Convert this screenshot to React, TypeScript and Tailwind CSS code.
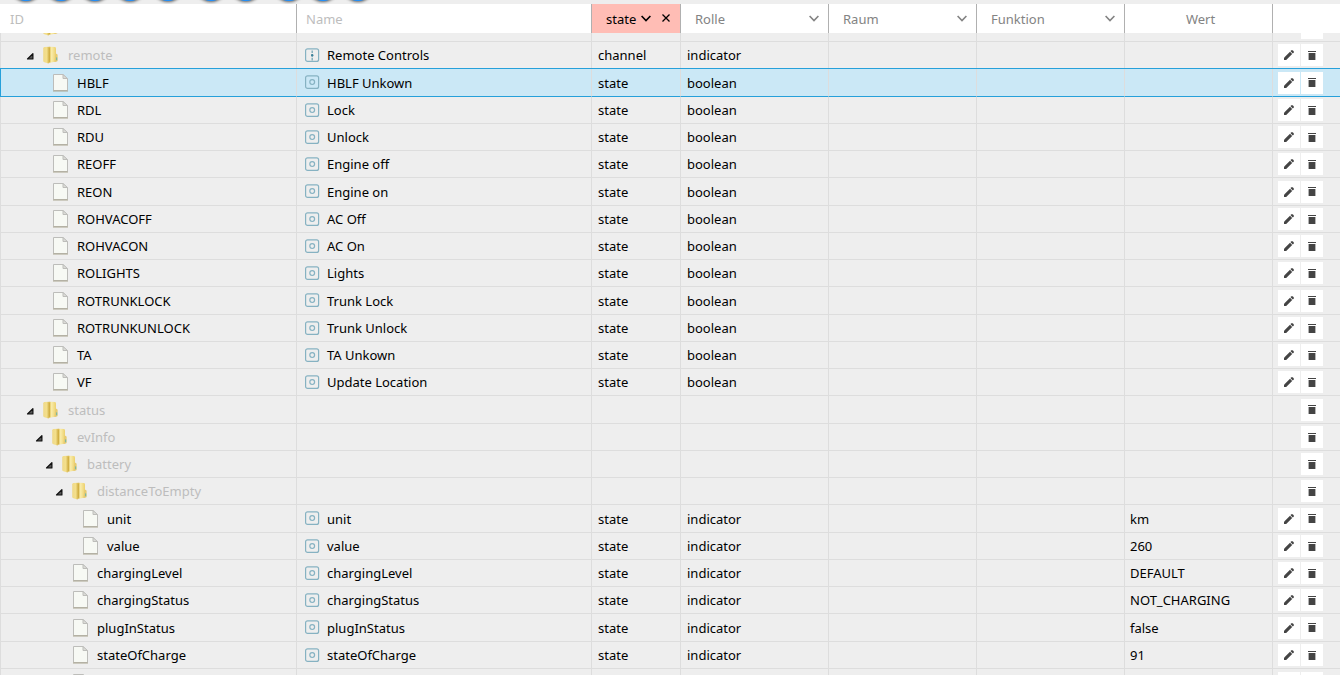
import React from "react";

type Row = {
  id: string;
  depth: number;
  kind: "folder" | "file";
  name?: string;
  type?: "state" | "channel";
  role?: string;
  value?: string;
  selected?: boolean;
};

const remote = (id: string, name: string, selected = false): Row => ({
  id, name, depth: 3, kind: "file", type: "state", role: "boolean", selected,
});

const info = (id: string, value: string, depth: number): Row => ({
  id, name: id, depth, kind: "file", type: "state", role: "indicator", value,
});

const rows: Row[] = [
  { id: "remote", depth: 0, kind: "folder", name: "Remote Controls", type: "channel", role: "indicator" },
  remote("HBLF", "HBLF Unkown", true),
  remote("RDL", "Lock"),
  remote("RDU", "Unlock"),
  remote("REOFF", "Engine off"),
  remote("REON", "Engine on"),
  remote("ROHVACOFF", "AC Off"),
  remote("ROHVACON", "AC On"),
  remote("ROLIGHTS", "Lights"),
  remote("ROTRUNKLOCK", "Trunk Lock"),
  remote("ROTRUNKUNLOCK", "Trunk Unlock"),
  remote("TA", "TA Unkown"),
  remote("VF", "Update Location"),
  { id: "status", depth: 0, kind: "folder" },
  { id: "evInfo", depth: 1, kind: "folder" },
  { id: "battery", depth: 2, kind: "folder" },
  { id: "distanceToEmpty", depth: 3, kind: "folder" },
  info("unit", "km", 6),
  info("value", "260", 6),
  info("chargingLevel", "DEFAULT", 5),
  info("chargingStatus", "NOT_CHARGING", 5),
  info("plugInStatus", "false", 5),
  info("stateOfCharge", "91", 5),
];

const folderIndent = ["pl-[25px]", "pl-[34px]", "pl-[44px]", "pl-[54px]"];
const fileIndent = ["", "", "", "pl-[52px]", "", "pl-[72px]", "pl-[82px]"];

function Folder() {
  return (
    <svg width="16" height="18" viewBox="0 0 16 18" className="shrink-0">
      <defs>
        <linearGradient id="folder-back" x1="0" x2="1">
          <stop offset="0" stopColor="#efd98a" />
          <stop offset="0.5" stopColor="#f3df8c" />
          <stop offset="1" stopColor="#cfab3c" />
        </linearGradient>
        <linearGradient id="folder-front" x1="0" x2="1">
          <stop offset="0" stopColor="#dcbb4c" />
          <stop offset="0.35" stopColor="#f9ecaa" />
          <stop offset="1" stopColor="#ecd06c" />
        </linearGradient>
      </defs>
      <path d="M1.2 2.4 Q1.2 1.2 2.4 1 L8 0.8 V16.2 L6.4 17.4 L2.4 16.2 Q1.2 15.8 1.2 15 Z" fill="url(#folder-back)" />
      <path d="M7.2 1.6 Q7.4 0.8 8.6 0.8 L13 1 Q14 1.2 14 2.4 V15.6 L9.2 16.6 Q7.6 16.8 7.4 15.6 Z" fill="url(#folder-front)" />
      <path d="M13.6 7.4 L15 8 Q15.6 8.3 15.6 9 V14.6 Q15.6 15.2 15 15.4 L12.4 15.9 Z" fill="#e6ca70" />
      <path d="M7.3 2 V15.8" stroke="#c9a53a" strokeWidth="0.7" />
      <rect x="14" y="11.4" width="1.2" height="2.8" fill="#7fb8a0" />
    </svg>
  );
}

function FileIcon() {
  return (
    <svg width="16" height="18" viewBox="0 0 16 18" className="shrink-0">
      <path d="M0.5 0.5 H10 L14.5 5 V16.5 H0.5 Z" fill="#f7f9f4" stroke="#bdbdba" />
      <path d="M10 0.5 V4.5 H14.5 Z" fill="#dcdcd8" stroke="#bdbdba" />
      <path d="M0 17 H15" stroke="#aaa58f" strokeWidth="1" />
    </svg>
  );
}

function Expander() {
  return (
    <svg width="8" height="8" viewBox="0 0 8 8" className="mt-0.5 shrink-0">
      <path d="M6.9 1.6 V7 H1.5 Z" fill="#555" stroke="#111" strokeWidth="1.2" strokeLinejoin="round" />
    </svg>
  );
}

function TypeIcon({ channel }: { channel: boolean }) {
  return (
    <svg width="15" height="15" viewBox="0 0 15 15" fill="none" className="shrink-0">
      <rect x="0.6" y="0.8" width="13" height="12.6" rx="2" stroke="#86b2c2" strokeWidth="1.2" />
      {channel ? (
        <>
          <path d="M7.2 2.4 V12.4" stroke="#7fabb9" strokeWidth="1.4" strokeDasharray="2.6 1.1" />
          <circle cx="7.2" cy="7.2" r="1.2" fill="#3f8299" />
        </>
      ) : (
        <circle cx="7.2" cy="7.1" r="2.4" stroke="#86b2c2" strokeWidth="1.2" />
      )}
    </svg>
  );
}

function Chevron() {
  return (
    <svg width="10" height="7" viewBox="0 0 10 7" fill="none" className="shrink-0">
      <path d="M0.6 1 L5 5.6 L9.4 1" stroke="currentColor" strokeWidth="1.6" />
    </svg>
  );
}

function Pencil() {
  return (
    <svg width="10" height="10" viewBox="0 0 10 10" fill="#444">
      <path d="M0 10 V7.8 L6 1.8 L8.2 4 L2.2 10 Z" />
      <path d="M6.6 1.2 L7.6 0.2 Q8 -0.1 8.4 0.2 L9.8 1.6 Q10.1 2 9.8 2.4 L8.8 3.4 Z" />
    </svg>
  );
}

function Trash() {
  return (
    <svg width="8" height="9" viewBox="0 0 8 9" fill="#444">
      <path d="M0 0 H8 V1 H0 Z M0.6 2 H7.4 V9 H0.6 Z" />
    </svg>
  );
}

const actionClass = "flex size-[22px] items-center justify-center bg-white";
const cell = "border-r border-b border-[#dddddd] p-0";

function TreeRow({ row, index }: { row: Row; index: number }) {
  const tone = row.selected
    ? "bg-[#cbe8f6] [&>td]:border-b-[#26a0da] [&>td]:shadow-[0_-1px_0_#26a0da]"
    : "";
  const height = index % 4 === 1 ? "h-7" : "h-[27px]";
  return (
    <tr className={`${height} ${tone}`}>
      <td className={`${cell} border-l ${row.selected ? "border-l-[#26a0da]" : ""}`}>
        {row.kind === "folder" ? (
          <div className={`flex items-center ${folderIndent[row.depth]}`}>
            <Expander />
            <span className="ml-2 flex items-center gap-[10px] text-[#bdbdbd]">
              <Folder />
              {row.id}
            </span>
          </div>
        ) : (
          <div className={`flex items-center gap-2 ${fileIndent[row.depth]}`}>
            <FileIcon />
            {row.id}
          </div>
        )}
      </td>
      <td className={cell}>
        {row.type && (
          <div className="flex items-center gap-[7px] pl-2">
            <TypeIcon channel={row.type === "channel"} />
            {row.name}
          </div>
        )}
      </td>
      <td className={`${cell} pl-1.5`}>{row.type}</td>
      <td className={`${cell} pl-1.5`}>{row.role}</td>
      <td className={cell} />
      <td className={cell} />
      <td className={`${cell} pl-[5px]`}>{row.value}</td>
      <td className="border-b border-[#dddddd] p-0">
        <div className="flex justify-end gap-px pr-[17px]">
          {row.type && (
            <button type="button" aria-label={`Edit ${row.id}`} className={actionClass}>
              <Pencil />
            </button>
          )}
          <button type="button" aria-label={`Delete ${row.id}`} className={actionClass}>
            <Trash />
          </button>
        </div>
      </td>
    </tr>
  );
}

const toolbar = [
  "ml-[10px]", "ml-[3px]", "ml-[2px]", "ml-[3px]", "ml-[6px]",
  "ml-[11px]", "ml-[3px]", "ml-[11px]", "ml-[2px]", "ml-[3px]",
];

const head = "border-r border-[#b0b0b0] p-0 text-left font-normal";

export default function App() {
  return (
    <div className="h-screen overflow-hidden bg-[#eeeeee] font-['Noto_Sans',sans-serif] text-[13px] leading-5 text-black">
      <div className="flex h-1 items-end overflow-hidden pb-[3px]">
        {toolbar.map((margin, i) => (
          <button
            key={i}
            type="button"
            aria-label={`Tool ${i + 1}`}
            className={`size-8 shrink-0 rounded-full bg-[#1e90ff] shadow-[0_1px_3px_rgba(0,0,0,0.6)] ${margin}`}
          />
        ))}
      </div>
      <table className="w-full table-fixed border-separate border-spacing-0">
        <colgroup>
          <col className="w-[297px]" />
          <col />
          <col className="w-[89px]" />
          <col className="w-[148px]" />
          <col className="w-[148px]" />
          <col className="w-[148px]" />
          <col className="w-[148px]" />
          <col className="w-[67px]" />
        </colgroup>
        <thead>
          <tr className="h-[29px] bg-white text-[#838383]">
            <th className={`${head} text-[#bdbdbd]`}>
              <span className="pl-[10px]">ID</span>
            </th>
            <th className={`${head} text-[#bdbdbd]`}>
              <span className="pl-[9px]">Name</span>
            </th>
            <th className={`${head} bg-[#ffbdb5] text-black`}>
              <div className="flex items-center pl-3.5">
                <button type="button" className="flex items-center gap-[5px]">
                  state
                  <Chevron />
                </button>
                <button type="button" aria-label="Clear filter" className="ml-[11px]">
                  <svg width="8" height="8" viewBox="0 0 8 8" className="mb-0.5">
                    <path d="M0.5 0.5 L7.5 7.5 M7.5 0.5 L0.5 7.5" stroke="#000" strokeWidth="1.3" />
                  </svg>
                </button>
              </div>
            </th>
            {["Rolle", "Raum", "Funktion"].map((label) => (
              <th key={label} className={head}>
                <button type="button" className="flex w-full items-center justify-between pr-[9px] pl-3.5">
                  {label}
                  <Chevron />
                </button>
              </th>
            ))}
            <th className="border-r border-[#b0b0b0] py-0 pr-0 pl-1 text-center font-normal">Wert</th>
            <th className="p-0" aria-label="Actions" />
          </tr>
        </thead>
        <tbody>
          <tr className="h-[9px]">
            <td className={`${cell} border-l`}>
              <div className="flex h-2 items-start overflow-hidden pl-[41px]">
                <div className="flex h-[3px] items-end overflow-hidden">
                  <Folder />
                </div>
              </div>
            </td>
            <td className={cell} />
            <td className={cell} />
            <td className={cell} />
            <td className={cell} />
            <td className={cell} />
            <td className={cell} />
            <td className="border-b border-[#dddddd] p-0">
              <div className="flex h-2 justify-end pr-[17px]">
                <div className="h-1.5 w-[22px] bg-white" />
              </div>
            </td>
          </tr>
          {rows.map((row, i) => (
            <TreeRow key={row.id} row={row} index={i} />
          ))}
          <tr>
            <td className="border-r border-l border-[#dddddd] p-0">
              <div className="flex h-7 items-center pl-[72px]">
                <FileIcon />
              </div>
            </td>
            <td className="border-r border-[#dddddd] p-0">
              <div className="flex h-7 items-center pl-2">
                <TypeIcon channel={false} />
              </div>
            </td>
            <td className="border-r border-[#dddddd] p-0" />
            <td className="border-r border-[#dddddd] p-0" />
            <td className="border-r border-[#dddddd] p-0" />
            <td className="border-r border-[#dddddd] p-0" />
            <td className="border-r border-[#dddddd] p-0" />
            <td className="p-0">
              <div className="flex justify-end gap-px pr-[17px]">
                <div className={actionClass} />
                <div className={actionClass} />
              </div>
            </td>
          </tr>
        </tbody>
      </table>
    </div>
  );
}
